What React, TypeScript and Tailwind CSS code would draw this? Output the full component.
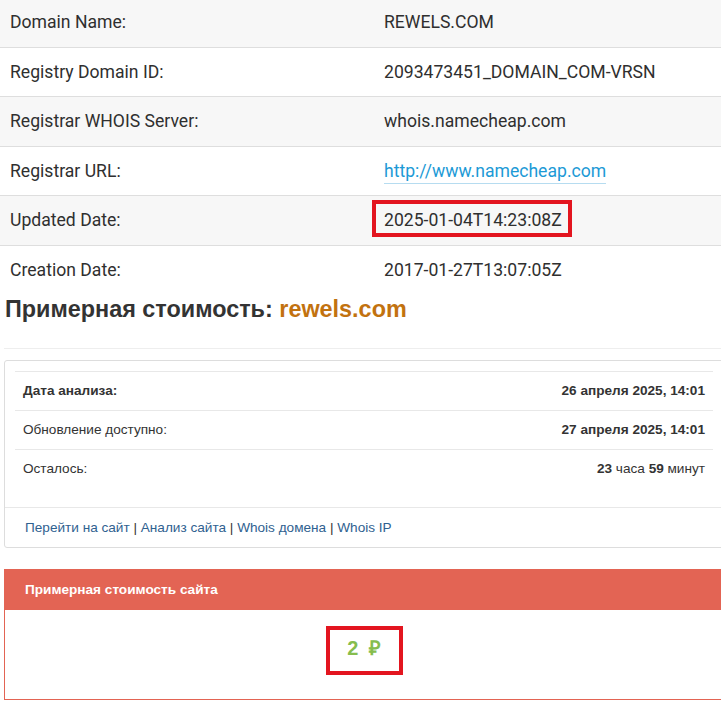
import React from "react";

type WhoisRow = { label: string; value: string; link?: boolean; marked?: boolean };

const whoisRows: WhoisRow[] = [
  { label: "Domain Name:", value: "REWELS.COM" },
  { label: "Registry Domain ID:", value: "2093473451_DOMAIN_COM-VRSN" },
  { label: "Registrar WHOIS Server:", value: "whois.namecheap.com" },
  { label: "Registrar URL:", value: "http://www.namecheap.com", link: true },
  { label: "Updated Date:", value: "2025-01-04T14:23:08Z", marked: true },
  { label: "Creation Date:", value: "2017-01-27T13:07:05Z" },
];

const roboto = { fontFamily: "Roboto, 'Liberation Sans', sans-serif" };

const App = () => {
  return (
    <div className="w-full overflow-hidden bg-white">
      <div className="w-[728px] -mt-[3px] text-[#333]" style={{ fontFamily: "'Liberation Sans', Arial, sans-serif" }}>
        {/* whois table */}
        <div style={roboto}>
          {whoisRows.map((row, i) => (
            <div
              key={row.label}
              className={`flex h-[49.5px] items-center border-t border-[#dedede] text-[17.6px] text-[#2f2f2f] ${
                i % 2 === 0 ? "bg-[#f7f7f7]" : "bg-white"
              } ${i === 0 ? "border-t-0" : ""}`}
            >
              <div className="w-[374px] px-[10px]">{row.label}</div>
              <div className="px-[10px]">
                {row.link ? (
                  <a href="#" className="border-b border-[#b6dcf0] pb-[2px] text-[#1d9ad6]">
                    {row.value}
                  </a>
                ) : row.marked ? (
                  <span className="relative">
                    {row.value}
                    <span className="absolute -left-[12px] -right-[10px] -top-[10px] -bottom-[7px] border-[4px] border-[#e3151f]" />
                  </span>
                ) : (
                  row.value
                )}
              </div>
            </div>
          ))}
        </div>

        <div className="px-[4px]">
          <h2 className="mt-[2px] pl-[1px] text-[23.4px] leading-[26px] font-bold text-[#333]">
            Примерная стоимость: <span className="text-[#c2720f]">rewels.com</span>
          </h2>
          <hr className="mt-[26px] border-[#eeeeee]" />

          {/* analysis panel */}
          <div className="mt-[11px] rounded-[3px] border border-[#dddddd] bg-white">
            <div className="px-[10px] pt-[10px] pb-[10px] text-[13.6px]">
              <div className="flex h-[39px] items-center justify-between border-t border-[#e8e8e8] px-[8px]">
                <span className="font-bold">Дата анализа:</span>
                <span className="font-bold">26 апреля 2025, 14:01</span>
              </div>
              <div className="flex h-[39px] items-center justify-between border-t border-[#e8e8e8] px-[8px]">
                <span>Обновление доступно:</span>
                <span className="font-bold">27 апреля 2025, 14:01</span>
              </div>
              <div className="flex h-[39px] items-center justify-between border-t border-[#e8e8e8] px-[8px]">
                <span>Осталось:</span>
                <span>
                  <b>23</b> часа <b>59</b> минут
                </span>
              </div>
            </div>
            <div className="mt-[9px] border-t border-[#e8e8e8] px-[20px] py-[10px] text-[13.6px] leading-[19px]">
              <a href="#" className="text-[#2f6190]">Перейти на сайт</a> |{" "}
              <a href="#" className="text-[#2f6190]">Анализ сайта</a> |{" "}
              <a href="#" className="text-[#2f6190]">Whois домена</a> |{" "}
              <a href="#" className="text-[#2f6190]">Whois IP</a>
            </div>
          </div>

          {/* estimated value panel */}
          <div className="mt-[21px] border border-[#e36454] bg-white">
            <div className="flex h-[40px] items-center bg-[#e36454] px-[20px] text-[13.6px] font-bold text-white">
              Примерная стоимость сайта
            </div>
            <div className="flex h-[89px] items-start justify-center pt-[26px]">
              <span className="relative text-[20px] leading-[24px] font-bold text-[#86bd4e]">
                2 <span className="ml-[5px]">₽</span>
                <span className="absolute -left-[21px] -right-[22px] -top-[10px] -bottom-[15px] border-[4px] border-[#e3151f]" />
              </span>
            </div>
          </div>
        </div>
      </div>
    </div>
  );
};

export default App;
